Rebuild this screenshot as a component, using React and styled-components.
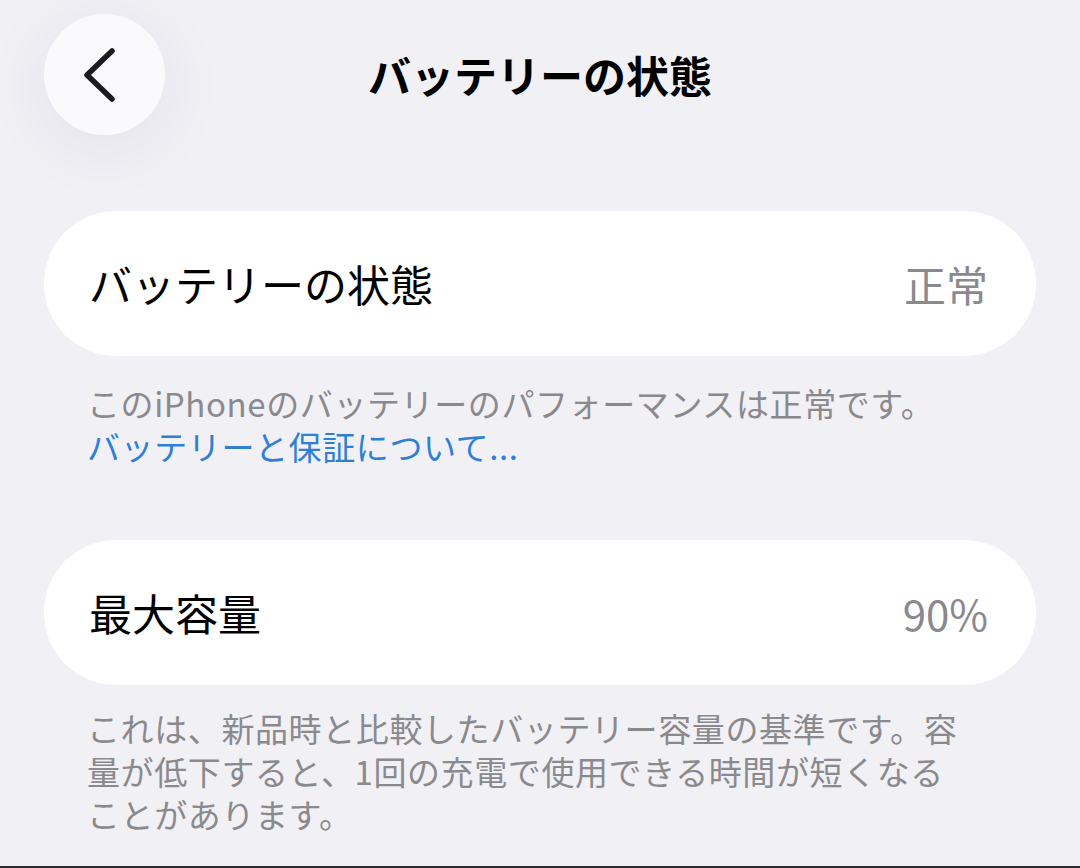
import React from 'react';
import styled, { createGlobalStyle } from 'styled-components';

const GlobalStyle = createGlobalStyle`
  html, body {
    margin: 0;
    padding: 0;
    background: #f1f0f5;
  }
  body {
    font-family: "Noto Sans CJK JP", "Noto Sans", sans-serif;
    -webkit-font-smoothing: antialiased;
  }
`;

const Page = styled.div`
  box-sizing: border-box;
  width: 1080px;
  height: 868px;
  padding: 14px 44px 0;
  background: #f1f0f5;
  border-bottom: 2px solid #2c2c30;
  overflow: hidden;
`;

const Header = styled.header`
  display: grid;
  grid-template-columns: 121px 1fr 121px;
  align-items: center;
  height: 121px;
`;

const BackButton = styled.button`
  width: 121px;
  height: 121px;
  border: none;
  border-radius: 50%;
  background: #fafafd;
  box-shadow: 0 12px 70px rgba(40, 40, 80, 0.07);
  display: flex;
  align-items: center;
  justify-content: center;
  padding: 0 10px 0 0;
  cursor: pointer;
`;

const Title = styled.h1`
  margin: 0;
  text-align: center;
  font-size: 43px;
  font-weight: 700;
  color: #000;
  line-height: 1;
`;

const Card = styled.div`
  display: flex;
  align-items: center;
  justify-content: space-between;
  height: 145px;
  margin-top: ${(p) => p.$top}px;
  padding: 0 48px 0 45px;
  background: #fff;
  border-radius: 72px;
`;

const Label = styled.span`
  font-size: 43px;
  color: #000;
  line-height: 1;
`;

const Value = styled.span`
  font-size: 42px;
  color: #8a8a8e;
  line-height: 1;
`;

const Footer = styled.p`
  margin: ${(p) => p.$top}px 0 0;
  padding: 0 43px;
  font-size: 33px;
  line-height: 43px;
  letter-spacing: 0.6px;
  color: #8a8a8e;
`;

const Link = styled.a`
  color: #2f7fd6;
  text-decoration: none;
`;

function Chevron() {
  return (
    <svg width="36" height="56" viewBox="0 0 36 56" fill="none">
      <path
        d="M30 4 L5 28 L30 52"
        stroke="#1c1c1e"
        strokeWidth="5.5"
        strokeLinecap="round"
        strokeLinejoin="round"
      />
    </svg>
  );
}

export default function App() {
  return (
    <>
      <GlobalStyle />
      <Page>
        <Header>
          <BackButton aria-label="戻る">
            <Chevron />
          </BackButton>
          <Title>バッテリーの状態</Title>
          <span />
        </Header>

        <Card $top={76}>
          <Label>バッテリーの状態</Label>
          <Value>正常</Value>
        </Card>
        <Footer $top={26}>
          このiPhoneのバッテリーのパフォーマンスは正常です。
          <br />
          <Link href="#">バッテリーと保証について...</Link>
        </Footer>

        <Card $top={72}>
          <Label>最大容量</Label>
          <Value>90%</Value>
        </Card>
        <Footer $top={22}>
          これは、新品時と比較したバッテリー容量の基準です。容
          <br />
          量が低下すると、1回の充電で使用できる時間が短くなる
          <br />
          ことがあります。
        </Footer>
      </Page>
    </>
  );
}
